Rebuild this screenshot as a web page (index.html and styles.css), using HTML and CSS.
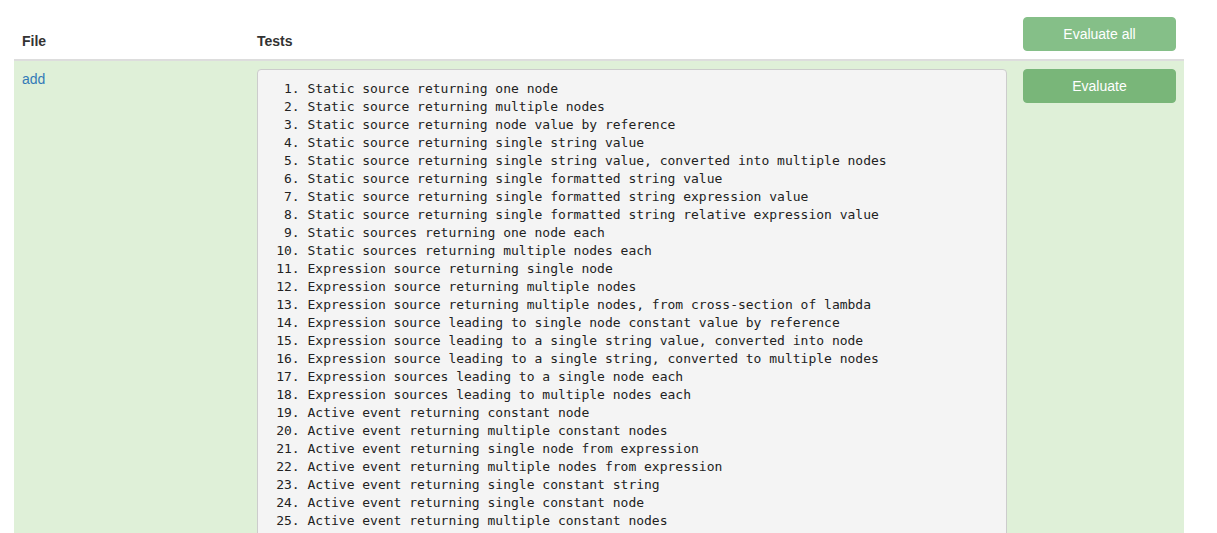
FILE: index.html
```html
<!DOCTYPE html>
<html>
<head>
<meta charset="utf-8">
<link rel="stylesheet" href="styles.css">
</head>
<body>
<table class="results">
  <thead>
    <tr>
      <th class="col-file">File</th>
      <th class="col-tests">Tests</th>
      <th class="col-action"><button class="btn btn-all">Evaluate all</button></th>
    </tr>
  </thead>
  <tbody>
    <tr class="success">
      <td><a href="#" class="file-link">add</a></td>
      <td>
<pre class="tests"><ol><li>Static source returning one node</li><li>Static source returning multiple nodes</li><li>Static source returning node value by reference</li><li>Static source returning single string value</li><li>Static source returning single string value, converted into multiple nodes</li><li>Static source returning single formatted string value</li><li>Static source returning single formatted string expression value</li><li>Static source returning single formatted string relative expression value</li><li>Static sources returning one node each</li><li>Static sources returning multiple nodes each</li><li>Expression source returning single node</li><li>Expression source returning multiple nodes</li><li>Expression source returning multiple nodes, from cross-section of lambda</li><li>Expression source leading to single node constant value by reference</li><li>Expression source leading to a single string value, converted into node</li><li>Expression source leading to a single string, converted to multiple nodes</li><li>Expression sources leading to a single node each</li><li>Expression sources leading to multiple nodes each</li><li>Active event returning constant node</li><li>Active event returning multiple constant nodes</li><li>Active event returning single node from expression</li><li>Active event returning multiple nodes from expression</li><li>Active event returning single constant string</li><li>Active event returning single constant node</li><li>Active event returning multiple constant nodes</li></ol></pre>
      </td>
      <td><button class="btn btn-eval">Evaluate</button></td>
    </tr>
  </tbody>
</table>
</body>
</html>
```

FILE: styles.css
```css
html, body {
  margin: 0;
  padding: 0;
  background: #fff;
}
body {
  font-family: "Liberation Sans", Arial, sans-serif;
  font-size: 14px;
  line-height: 20px;
  color: #333;
  padding-top: 9px;
}
.results {
  margin-left: 14px;
  width: 1170px;
  border-collapse: collapse;
  border-spacing: 0;
}
.results th {
  text-align: left;
  font-weight: bold;
  vertical-align: bottom;
  padding: 8px;
  border-bottom: 2px solid #ddd;
}
.results td {
  vertical-align: top;
  padding: 8px;
}
.col-file { width: 219px; }
.col-action { width: 153px; }
tr.success td {
  background: #dff0d8;
}
.file-link {
  color: #337ab7;
  text-decoration: none;
}
.btn {
  display: block;
  width: 153px;
  height: 34px;
  border: 1px solid transparent;
  border-radius: 4px;
  color: #fff;
  font-family: "Liberation Sans", Arial, sans-serif;
  font-size: 14px;
  line-height: 20px;
  padding: 6px 12px;
  text-align: center;
}
.btn-all {
  background: #85bf88;
  border-color: #85bf88;
}
.btn-eval {
  background: #79b679;
  border-color: #79b679;
}
.tests {
  margin: 0;
  padding: 9.5px;
  background: #f4f4f4;
  border: 1px solid #ccc;
  border-radius: 4px;
  font-family: "DejaVu Sans Mono", Menlo, monospace;
  font-size: 13px;
  line-height: 18px;
  color: #222;
  white-space: pre-wrap;
}
.tests ol {
  margin: 0 0 10px 0;
  padding-left: 40px;
}
```
